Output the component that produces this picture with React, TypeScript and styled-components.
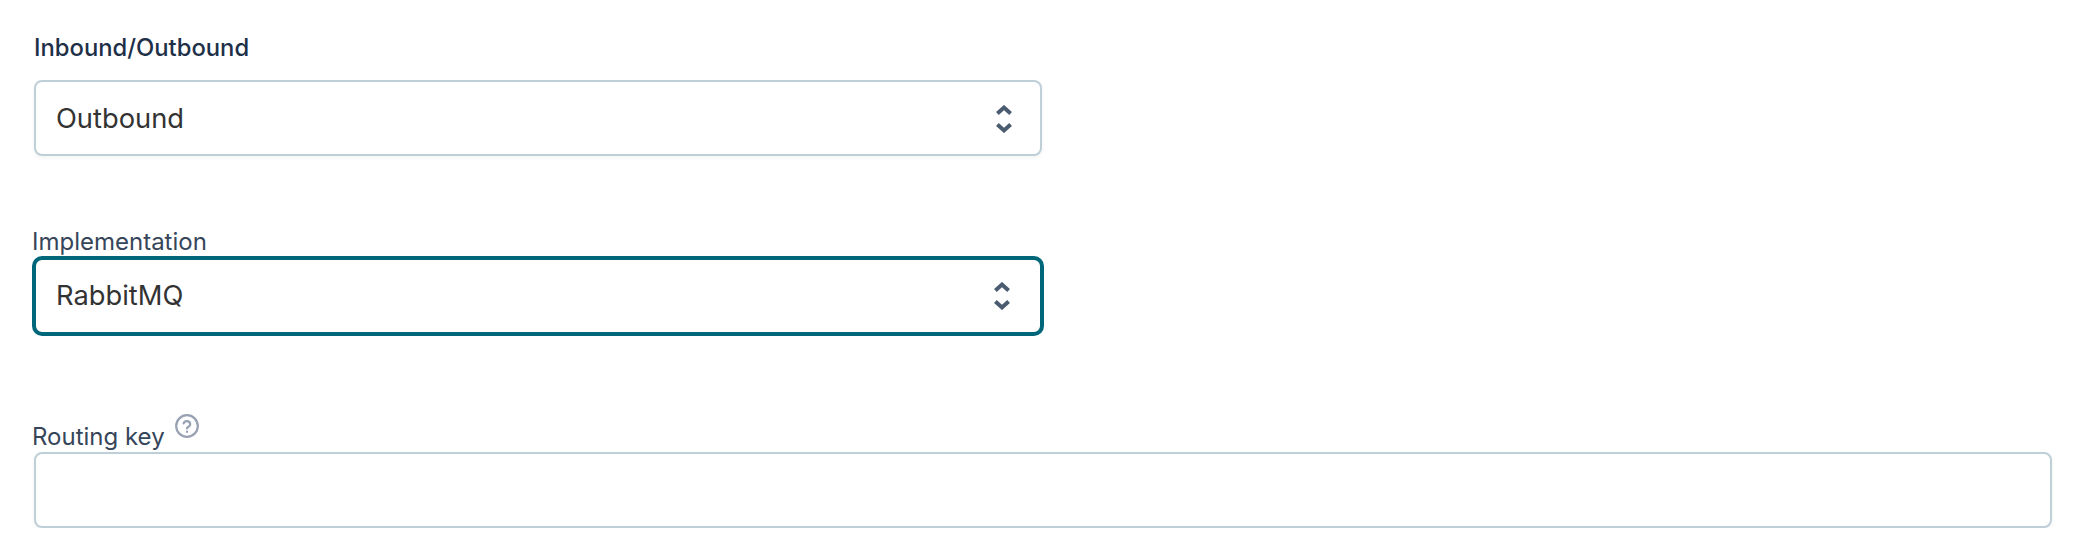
import { createGlobalStyle, styled } from 'styled-components'

const Global = createGlobalStyle`
  html, body {
    margin: 0;
    background: #fff;
    font-family: Inter, "Liberation Sans", sans-serif;
  }
`

const Form = styled.form`
  display: flex;
  flex-direction: column;
  padding: 35px 32px 0;
`

const Field = styled.div<{ $gap: number; $after: number }>`
  display: flex;
  flex-direction: column;
  gap: ${(p) => p.$gap}px;
  margin-bottom: ${(p) => p.$after}px;
`

const LabelRow = styled.div`
  display: flex;
  align-items: flex-start;
  gap: 10px;
`

const Label = styled.label<{ $strong?: boolean }>`
  font-size: ${(p) => (p.$strong ? 23.8 : 24)}px;
  line-height: 26px;
  font-weight: ${(p) => (p.$strong ? 500 : 400)};
  color: ${(p) => (p.$strong ? '#1e3048' : '#36465a')};
  padding-left: ${(p) => (p.$strong ? 2 : 0)}px;
`

const HelpWrap = styled.span`
  display: flex;
  margin-top: -10px;
`

const Control = styled.div<{ $focused?: boolean; $full?: boolean }>`
  box-sizing: border-box;
  display: flex;
  align-items: center;
  justify-content: space-between;
  height: 76px;
  margin: 0 ${(p) => (p.$full ? 0 : 2)}px 0 2px;
  width: ${(p) => (p.$full ? 'auto' : '1008px')};
  padding: 2px 28px 0 20px;
  border: 2px solid #bfcfd8;
  border-radius: 8px;
  background: #fff;
  font-size: 27.3px;
  color: #333;
  box-shadow: 0 2px 4px rgba(30, 48, 72, 0.05);

  ${(p) =>
    p.$focused &&
    `
    height: 80px;
    margin: 0;
    width: 1012px;
    padding: 0 30px 0 20px;
    border: 4px solid #00667a;
    border-radius: 10px;
    box-shadow: none;
  `}
`

const Value = styled.span`
  line-height: 32px;
`

function Chevrons() {
  return (
    <svg width="16" height="28" viewBox="0 0 16 28" fill="none" stroke="#4b5c70" strokeWidth="4" aria-hidden="true">
      <path d="M1.4 8.6 8 2.6l6.6 6" />
      <path d="M1.4 19.4 8 25.4l6.6-6" />
    </svg>
  )
}

function HelpIcon() {
  return (
    <svg width="24" height="24" viewBox="0 0 24 24" fill="none" stroke="#98a2b3" strokeWidth="2.2" aria-hidden="true">
      <circle cx="12" cy="12" r="10.8" />
      <path d="M8.6 9.4a3.4 3.4 0 0 1 6.6 1c0 2.2-3.2 2.4-3.2 4" strokeLinecap="round" />
      <path d="M12 17.6v.4" strokeLinecap="round" />
    </svg>
  )
}

export default function App() {
  return (
    <>
      <Global />
      <Form>
        <Field $gap={19} $after={73}>
          <Label $strong>Inbound/Outbound</Label>
          <Control>
            <Value>Outbound</Value>
            <Chevrons />
          </Control>
        </Field>
        <Field $gap={1} $after={88}>
          <Label>Implementation</Label>
          <Control $focused>
            <Value>RabbitMQ</Value>
            <Chevrons />
          </Control>
        </Field>
        <Field $gap={2} $after={0}>
          <LabelRow>
            <Label>Routing key</Label>
            <HelpWrap>
              <HelpIcon />
            </HelpWrap>
          </LabelRow>
          <Control $full />
        </Field>
      </Form>
    </>
  )
}
